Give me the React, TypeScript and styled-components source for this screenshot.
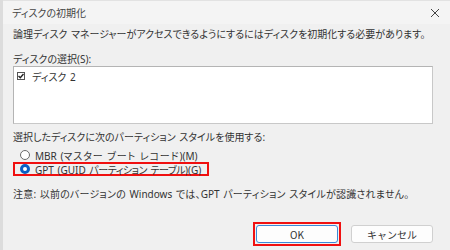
import React from 'react'
import styled, { createGlobalStyle } from 'styled-components'

const GlobalStyle = createGlobalStyle`
  html, body {
    margin: 0;
    padding: 0;
    background: #f0f0f0;
  }
  body {
    font-family: 'Noto Sans CJK JP', 'Noto Sans', sans-serif;
    font-size: 10px;
    color: #333;
    font-feature-settings: 'palt';
  }
`

const Window = styled.div`
  width: 450px;
  height: 250px;
  display: flex;
  flex-direction: column;
  background: #f0f0f0;
  border-left: 3px solid #dcdcdc;
  box-sizing: border-box;
  overflow: hidden;
`

const TitleBar = styled.div`
  height: 24px;
  display: flex;
  align-items: center;
  justify-content: space-between;
  padding: 0 10px 0 9px;
  background: #f4f4f4;
  border-top: 1px solid #e2e2e2;
  box-sizing: border-box;
`

const Title = styled.span`
  font-size: 10px;
  color: #444;
`

const Close = styled.svg`
  width: 10px;
  height: 10px;
  margin-top: 1px;
`

const Body = styled.div`
  display: flex;
  flex-direction: column;
  padding: 3px 17px 0 10px;
`

const Text = styled.div<{ $gap?: number; $ls?: number }>`
  line-height: 14px;
  margin-top: ${({ $gap }) => $gap ?? 0}px;
  letter-spacing: ${({ $ls }) => $ls ?? 0}px;
  white-space: pre;
`

// half-width runs (Latin, digits, spaces) use a Segoe-like face
const Latin = styled.span`
  font-family: 'Noto Sans', 'Open Sans', sans-serif;
  font-size: 10px;
  letter-spacing: 0;
  word-spacing: 1px;
`

const CJK = /[\u3000-\u30ff\u4e00-\u9fff\uff00-\uffef]/

const Mixed = ({ children }: { children: string }) => {
  const parts = children.split(/([\u3000-\u30ff\u4e00-\u9fff\uff00-\uffef]+)/).filter(Boolean)
  return (
    <>
      {parts.map((p, i) => (CJK.test(p) ? <span key={i}>{p}</span> : <Latin key={i}>{p}</Latin>))}
    </>
  )
}

const ListBox = styled.div`
  height: 58px;
  background: #fff;
  border: 1px solid #b4b4b4;
  border-right-color: #c8c8c8;
  border-bottom-color: #c8c8c8;
  box-sizing: border-box;
  padding: 2px 0 0 2px;
`

const ItemRow = styled.label`
  display: flex;
  align-items: center;
  gap: 7px;
  height: 14px;
  white-space: pre;
`

const CheckBox = styled.span`
  width: 8px;
  height: 8px;
  border: 1px solid #555;
  box-sizing: border-box;
  display: flex;
  align-items: center;
  justify-content: center;
  background: #fff;
  margin-left: 1px;
`

const RadioRow = styled.div<{ $marked?: boolean; $ls?: number }>`
  display: flex;
  align-items: center;
  gap: 5px;
  height: 14px;
  width: 196px;
  box-sizing: border-box;
  padding-left: ${({ $marked }) => ($marked ? 2 : 4)}px;
  border: ${({ $marked }) => ($marked ? '2px solid #f01010' : '0')};
  letter-spacing: ${({ $ls }) => $ls ?? 0}px;
  white-space: pre;
`

const Radio = styled.span<{ $on?: boolean }>`
  width: 10px;
  height: 10px;
  border-radius: 50%;
  box-sizing: border-box;
  flex: none;
  margin-left: 3px;
  ${({ $on }) =>
    $on
      ? 'border: 3px solid #0a5fc4; background: #fff;'
      : 'border: 1px solid #6a6a6a; background: #fff;'}
`

const ButtonRow = styled.div`
  display: flex;
  justify-content: flex-end;
  align-items: center;
  gap: 10px;
  margin-top: 21px;
`

const FocusRing = styled.div`
  border: 2px solid #f01010;
  padding: 1px;
`

const Button = styled.button<{ $primary?: boolean }>`
  width: 82px;
  height: 18px;
  font-family: inherit;
  font-size: 10px;
  color: #333;
  background: #fdfdfd;
  border: 1px solid ${({ $primary }) => ($primary ? '#3b8ad8' : '#d0d0d0')};
  border-radius: 3px;
  padding: 0;
  display: flex;
  align-items: center;
  justify-content: center;
  box-sizing: border-box;
`

export default function App() {
  return (
    <>
      <GlobalStyle />
      <Window>
        <TitleBar>
          <Title>ディスクの初期化</Title>
          <Close viewBox="0 0 10 10">
            <path d="M1 1 L9 9 M9 1 L1 9" stroke="#444" strokeWidth="1" />
          </Close>
        </TitleBar>
        <Body>
          <Text>
            <Mixed>論理ディスク マネージャーがアクセスできるようにするにはディスクを初期化する必要があります。</Mixed>
          </Text>
          <Text $gap={11}>
            <Mixed>ディスクの選択(S):</Mixed>
          </Text>
          <ListBox>
            <ItemRow>
              <CheckBox>
                <svg width="6" height="6" viewBox="0 0 6 6">
                  <path d="M0.5 3 L2.3 4.8 L5.5 1" stroke="#222" strokeWidth="1.4" fill="none" />
                </svg>
              </CheckBox>
              <span>
                <Mixed>ディスク 2</Mixed>
              </span>
            </ItemRow>
          </ListBox>
          <Text $gap={6}>
            <Mixed>選択したディスクに次のパーティション スタイルを使用する:</Mixed>
          </Text>
          <div style={{ height: 4 }} />
          <RadioRow $ls={0.9}>
            <Radio />
            <span>
              <Mixed>MBR (マスター ブート レコード)(M)</Mixed>
            </span>
          </RadioRow>
          <RadioRow $marked $ls={-0.5}>
            <Radio $on />
            <span>
              <Mixed>GPT (GUID パーティション テーブル)(G)</Mixed>
            </span>
          </RadioRow>
          <Text $gap={11} $ls={0.2}>
            <Mixed>注意: 以前のバージョンの Windows では、GPT パーティション スタイルが認識されません。</Mixed>
          </Text>
          <ButtonRow>
            <FocusRing>
              <Button $primary>OK</Button>
            </FocusRing>
            <Button>キャンセル</Button>
          </ButtonRow>
        </Body>
      </Window>
    </>
  )
}
